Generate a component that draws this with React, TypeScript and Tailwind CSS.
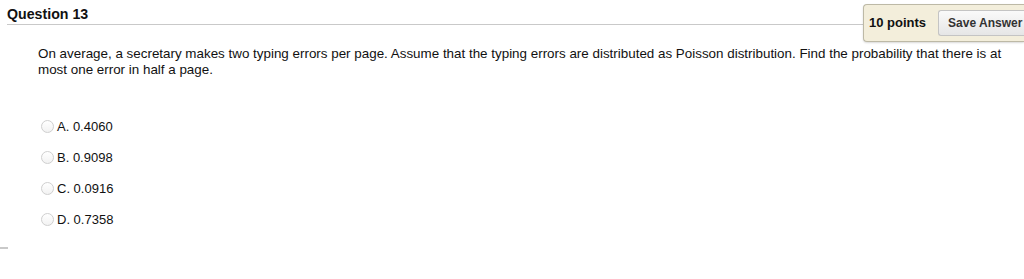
export default function App() {
  const options = ["A. 0.4060", "B. 0.9098", "C. 0.0916", "D. 0.7358"];

  return (
    <div className="relative h-[279px] w-[1024px] overflow-hidden bg-white font-['Liberation_Sans',Arial,sans-serif] text-[#111]">
      {/* header row */}
      <div className="flex items-start">
        <div className="flex-1 pl-[7px] pt-[6px]">
          <h2 className="text-[14.2px] font-bold leading-[17px]">Question 13</h2>
          <div className="mt-[1px] h-px bg-[#c9c9c9]" />
        </div>
        <div className="mt-[4px] flex h-[38px] w-[161px] items-center gap-[12px] rounded-l-[4px] border border-r-0 border-[#bdb9a6] bg-[#f3eedb] pl-[5px] shadow-[0_1px_2px_rgba(0,0,0,0.15)]">
          <span className="whitespace-nowrap text-[13px] font-bold">10 points</span>
          <button className="h-[26px] flex-1 whitespace-nowrap rounded-l-[3px] border border-r-0 border-[#c4c4c4] bg-gradient-to-b from-[#fafafa] to-[#e6e6e6] pl-[9px] text-left text-[12px] font-bold text-[#333]">
            Save Answer
          </button>
        </div>
      </div>

      {/* question text */}
      <p className="mt-[4px] pl-[38px] pr-[16px] text-[13.4px] leading-[16px]">
        On average, a secretary makes two typing errors per page. Assume that the typing errors are distributed as Poisson distribution. Find the probability that there is at most one error in half a page.
      </p>

      {/* options */}
      <ul className="mt-[40px] flex flex-col gap-[14px] pl-[41px]">
        {options.map((o) => (
          <li key={o} className="flex h-[17px] items-center gap-[3px] text-[13px]">
            <span className="h-[13px] w-[13px] rounded-full border border-[#cfcfcf] bg-gradient-to-b from-white to-[#f2f2f2]" />
            <span>{o}</span>
          </li>
        ))}
      </ul>

      <div className="absolute left-0 top-[247px] h-[2px] w-[8px] bg-[#c9c9c9]" />
    </div>
  );
}
